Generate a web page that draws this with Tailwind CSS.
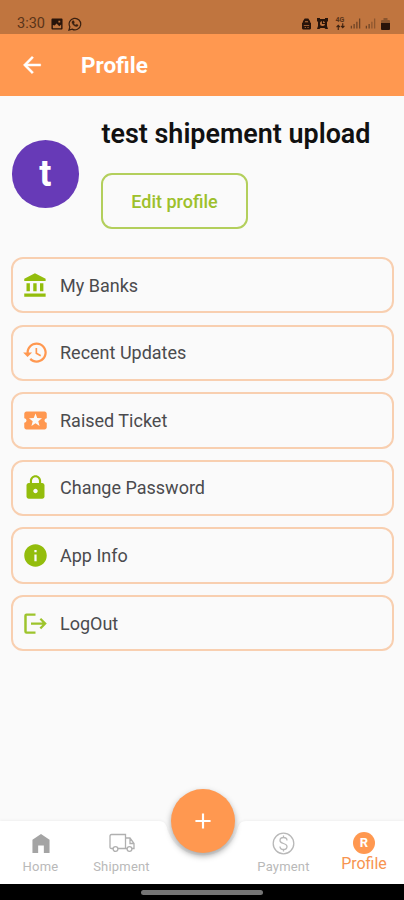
<!DOCTYPE html>
<html lang="en">
<head>
<meta charset="utf-8">
<meta name="viewport" content="width=device-width, initial-scale=1">
<title>Profile</title>
<script src="https://cdn.jsdelivr.net/npm/@tailwindcss/browser@4"></script>
</head>
<body class="w-[404px] h-[900px] overflow-hidden bg-[#fafafa] font-['Roboto',sans-serif] flex flex-col">
  <div class="h-[34px] shrink-0 bg-[#c0753f] flex items-end justify-between pl-[17px] pr-[14px] pb-[2px] text-[#5a3419]">
    <div class="flex items-center gap-[5px]">
      <span class="text-[14.5px] leading-[16px] w-[29px] whitespace-nowrap">3:30</span>
      <svg class="size-[12px]" viewBox="0 0 13 13"><path fill="#28140a" fill-rule="evenodd" d="M1.5 .5h10q1 0 1 1v10q0 1-1 1h-10q-1 0-1-1v-10q0-1 1-1zM2 7.500V11h9V7L9 9 6 6 4 8zM8 3v2h2V3z"/></svg>
      <svg class="size-[14px]" viewBox="0 0 15 15" fill="none" stroke="#3a2010"><path stroke-width="1.300" d="M1 14l1-3.400A6.200 6.200 0 1 1 4.400 13z"/><path fill="#3a2010" stroke-width=".4" d="M5.200 4l1 .1.700 1.700-.7.800c.5 1 1.200 1.600 2.100 2l.9-.9 1.600.8c0 1.200-.9 1.800-2 1.700C6.500 9.900 4.600 8 4.200 6 4.100 5 4.600 4.200 5.200 4z"/></svg>
    </div>
    <div class="flex items-center pb-[2px]">
      <svg class="w-[9px] h-[12px]" viewBox="0 0 10 12"><path fill="#28140a" fill-rule="evenodd" d="M3 0h4l2 3v1l1 1v6l-1 1H1l-1-1V5l1-1V3zM3.500 3L3 4h4L6.500 3zM2 7v1h6V7zM3 9.500v1h1.500v-1zM6 9.500v1h1.500v-1z"/></svg>
      <svg class="w-[11px] h-[11px] ml-[6px]" viewBox="0 0 11 11"><path fill="#28140a" d="M0 0h3v1h5V0h3v3l-1 1v4l1 3H8.500l-1-1h-4l-1 1H0l1-3V4L0 3z"/><circle cx="5.500" cy="5.500" r="2.500" fill="#c0753f"/><path d="M5.500 3v2.500h2.500" fill="none" stroke="#28140a" stroke-width="1.200"/></svg>
      <div class="ml-[7px] w-[10px] h-[13px] flex flex-col items-center">
        <span class="text-[7px] leading-[6px] font-bold">4G</span>
        <svg class="w-[9px] h-[7px]" viewBox="0 0 8 6"><path d="M2 6V2M.5 3.500L2 2l1.500 1.500M6 0v4M4.500 2.500L6 4l1.500-1.500" fill="none" stroke="#3a2010"/></svg>
      </div>
      <svg class="w-[11px] h-[11px] ml-[5px]" viewBox="0 0 12 11" fill="none" stroke="#6d4325" stroke-width="1.400"><path d="M1.500 11V8M4.500 11V6M7.500 11V3.500M10.500 11V0"/></svg>
      <svg class="w-[11px] h-[11px] ml-[4px]" viewBox="0 0 12 11" fill="none" stroke="#6d4325" stroke-width="1.400"><path d="M1.500 11V8M4.500 11V6"/><path opacity=".6" d="M7.500 11V3.500M10.500 11V0"/></svg>
      <svg class="w-[9px] h-[12px] ml-[5px]" viewBox="0 0 9 12"><path fill="#8a552e" d="M2.500 0h4v2H8q1 0 1 1v3H0V3q0-1 1-1h1.500z"/><path fill="#28140a" d="M0 5h9v6q0 1-1 1H1q-1 0-1-1z"/></svg>
    </div>
  </div>

  <header class="h-[62px] shrink-0 bg-[#ff9850] flex items-center pl-[19px] text-white">
    <svg class="size-[26px]" viewBox="0 0 24 24" fill="currentColor" stroke="currentColor" stroke-width=".4"><path d="M20 11H7.830l5.590-5.590L12 4l-8 8 8 8 1.410-1.410L7.830 13H20v-2z"/></svg>
    <h1 class="ml-[36px] text-[22.500px] leading-[28px] font-bold">Profile</h1>
  </header>

  <main class="flex-1 min-h-0 pl-[11px]">
    <section class="flex pt-[22px]">
      <div class="mt-[22px] ml-[.5px] size-[67.500px] rounded-full bg-[#673ab7] text-white text-[36px] font-bold flex items-center justify-center">t</div>
      <div class="ml-[22px]">
        <h2 class="ml-[.5px] text-[26.900px] leading-[32px] font-semibold text-[#111] whitespace-nowrap">test shipement upload</h2>
        <button class="mt-[23px] block w-[147px] h-[56px] rounded-[11px] border-2 border-[#b3cf5c] text-[#9dc02b] text-[18px] font-medium">Edit profile</button>
      </div>
    </section>

    <ul class="mt-[28px] flex flex-col gap-[11.200px] text-[18px] text-[#4b4b4e]">
      <li class="h-[56.400px] w-[383px] rounded-[12px] border-2 border-[#f8cfb0] flex items-center gap-[11px] pl-[9px]">
        <svg class="size-[27px]" viewBox="0 0 24 24" fill="#93bd0c"><path d="M4 10v7h3v-7H4zm6 0v7h3v-7h-3zM2 22h19v-3H2v3zm14-12v7h3v-7h-3zm-4.500-9L2 6v2h19V6l-9.500-5z"/></svg>My Banks</li>
      <li class="h-[56.400px] w-[383px] rounded-[12px] border-2 border-[#f8cfb0] flex items-center gap-[11px] pl-[9px]">
        <svg class="size-[27px]" viewBox="0 0 24 24" fill="#ff9850"><path d="M13 3c-4.970 0-9 4.030-9 9H1l3.890 3.890.070.140L9 12H6c0-3.870 3.130-7 7-7s7 3.130 7 7-3.130 7-7 7c-1.930 0-3.680-.790-4.940-2.060l-1.420 1.420C8.270 19.990 10.510 21 13 21c4.970 0 9-4.030 9-9s-4.030-9-9-9zm-1 5v5l4.280 2.540.720-1.210-3.500-2.080V8H12z"/></svg>Recent Updates</li>
      <li class="h-[56.400px] w-[383px] rounded-[12px] border-2 border-[#f8cfb0] flex items-center gap-[11px] pl-[9px]">
        <svg class="size-[27px]" viewBox="0 0 24 24" fill="#ff9850"><path d="M20 12c0-1.100.900-2 2-2V6c0-1.100-.900-2-2-2H4c-1.100 0-1.990.900-1.990 2v4c1.100 0 1.990.900 1.990 2s-.890 2-2 2v4c0 1.100.900 2 2 2h16c1.100 0 2-.900 2-2v-4c-1.100 0-2-.900-2-2zm-4.420 4.800L12 14.500l-3.580 2.300 1.080-4.120-3.290-2.690 4.240-.250L12 5.800l1.540 3.950 4.240.250-3.290 2.690 1.090 4.110z"/></svg>Raised Ticket</li>
      <li class="h-[56.400px] w-[383px] rounded-[12px] border-2 border-[#f8cfb0] flex items-center gap-[11px] pl-[9px]">
        <svg class="size-[27px]" viewBox="0 0 24 24" fill="#93bd0c"><path d="M18 8h-1V6c0-2.760-2.240-5-5-5S7 3.240 7 6v2H6c-1.100 0-2 .900-2 2v10c0 1.100.900 2 2 2h12c1.100 0 2-.900 2-2V10c0-1.100-.900-2-2-2zm-6 9c-1.100 0-2-.900-2-2s.900-2 2-2 2 .900 2 2-.900 2-2 2zm3.100-9H8.900V6c0-1.710 1.390-3.100 3.100-3.100 1.710 0 3.100 1.390 3.100 3.100v2z"/></svg>Change Password</li>
      <li class="h-[56.400px] w-[383px] rounded-[12px] border-2 border-[#f8cfb0] flex items-center gap-[11px] pl-[9px]">
        <svg class="size-[27px]" viewBox="0 0 24 24" fill="#93bd0c"><path d="M12 2C6.480 2 2 6.480 2 12s4.480 10 10 10 10-4.480 10-10S17.520 2 12 2zm1 15h-2v-6h2v6zm0-8h-2V7h2v2z"/></svg>App Info</li>
      <li class="h-[56.400px] w-[383px] rounded-[12px] border-2 border-[#f8cfb0] flex items-center gap-[11px] pl-[9px]">
        <svg class="size-[27px]" viewBox="0 0 24 24" fill="#9dc42c"><path d="M4.200 5h7.800V3H4Q2 3 2 5v14q0 2 2 2h8v-2H4.200V5zM17 7l-1.400 1.400 2.600 2.600H8v2h10.200l-2.600 2.600L17 17l5-5z"/></svg>LogOut</li>
    </ul>
  </main>

  <nav class="relative h-[80px] shrink-0 text-[#b9b9b9]">
    <svg class="absolute left-0 -top-[2px] w-[404px] h-[82px] drop-shadow-[0_-1px_1px_rgba(0,0,0,0.04)]" viewBox="0 0 404 82"><path fill="#fff" d="M0 3H158C166 3 166.500 8 168 13A36.500 36.500 0 0 0 237 13C238.500 8 239 3 247 3H404V82H0z"/></svg>
    <div class="relative h-[64px] flex text-[13px] leading-[16px] tracking-[.2px]">
      <div class="w-[81px] flex flex-col items-center pt-[14px]">
        <svg class="w-[18px] h-[19px]" viewBox="0 0 18 20" fill="#a4a4a4"><path d="M9 0L18 6v14h-6v-8H6v8H0V6z"/></svg>
        <span class="mt-[6px]">Home</span>
      </div>
      <div class="w-[81px] flex flex-col items-center pt-[13px]">
        <svg class="w-[26px] h-[20px]" viewBox="0 0 26 20" fill="none" stroke="#b0b0b0" stroke-width="1.300"><path d="M4 15.500H2.500Q1 15.500 1 14V3Q1 1.500 2.500 1.500h14v14H9M16.500 5h4.500l4 5.500v5h-2M16.500 15.500H18M21 5v5.500h4"/><circle cx="6.500" cy="16" r="2.400"/><circle cx="20.500" cy="16" r="2.400"/></svg>
        <span class="mt-[6px]">Shipment</span>
      </div>
      <div class="w-[81px]"></div>
      <div class="w-[81px] flex flex-col items-center pt-[12px]">
        <svg class="size-[23px]" viewBox="0 0 23 23" fill="none" stroke="#b8b8b8" stroke-width="1.300"><circle cx="11.500" cy="11.500" r="10.300"/><path d="M15 8.500C15 6.500 13.500 5.500 11.500 5.500S8 6.600 8 8.500c0 4 7 2 7 6 0 2-1.500 3-3.500 3S8 16.500 8 14.500M11.500 3.500v2M11.500 17.500v2"/></svg>
        <span class="mt-[4px]">Payment</span>
      </div>
      <div class="w-[80px] flex flex-col items-center pt-[12px] text-[#f79450]">
        <div class="size-[22px] rounded-full bg-[#ff9850] text-white text-[13px] font-bold flex items-center justify-center">R</div>
        <span class="mt-px text-[16px] leading-[18px] tracking-normal">Profile</span>
      </div>
    </div>
    <button class="absolute left-[171px] -top-[31px] size-[64px] rounded-full bg-[#ff9850] shadow-[0_3px_6px_rgba(0,0,0,0.35)] flex items-center justify-center">
      <svg class="size-[26px]" viewBox="0 0 24 24" fill="#fff"><path d="M19 13h-6v6h-2v-6H5v-2h6V5h2v6h6v2z"/></svg>
    </button>
    <div class="absolute left-0 bottom-0 w-[404px] h-[16px] bg-black flex items-center justify-center">
      <div class="w-[122px] h-[5px] rounded-full bg-[#757575]"></div>
    </div>
  </nav>
</body>
</html>
